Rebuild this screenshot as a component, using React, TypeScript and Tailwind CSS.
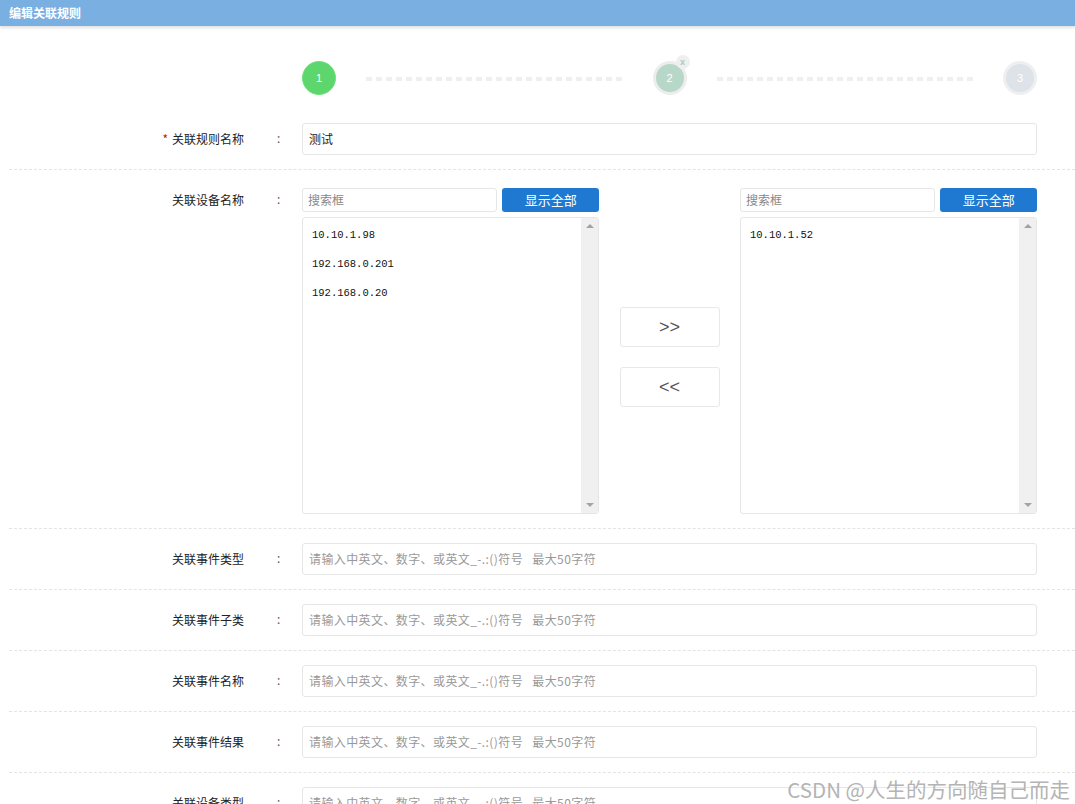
import React from 'react';

const cjk = "font-['Noto_Sans_CJK_SC','Liberation_Sans',sans-serif]";
const placeholder = '请输入中英文、数字、或英文_-.:()符号\u00a0\u00a0\u00a0最大50字符';

const rows = ['关联事件类型', '关联事件子类', '关联事件名称', '关联事件结果', '关联设备类型'];

function StepLine() {
  return (
    <div className="mt-[2px] h-[4px] flex-1 bg-[repeating-linear-gradient(90deg,#efefef_0_6px,transparent_6px_10px)]" />
  );
}

function Steps() {
  return (
    <div className="flex items-center pl-[302px] pr-[38px] pt-[35px] pb-[14px]">
      <div className="flex h-[34px] w-[34px] items-center justify-center rounded-full border border-[#6ee07c] bg-[#5dd66d] text-[11px] text-white font-['Liberation_Sans',sans-serif]">
        1
      </div>
      <div className="mx-[29px] ml-[30px] flex flex-1">
        <StepLine />
      </div>
      <div className="relative flex h-[34px] w-[34px] items-center justify-center rounded-full border-[3px] border-[#ededed] bg-[#b7d8c9] text-[11px] text-white font-['Liberation_Sans',sans-serif]">
        2
        <span className="absolute -right-[6px] -top-[9px] flex h-[14px] w-[14px] items-center justify-center rounded-full bg-[#efefef] text-[9px] font-bold leading-none text-[#9fd0bf]">
          x
        </span>
      </div>
      <div className="mx-[29px] ml-[30px] flex flex-1">
        <StepLine />
      </div>
      <div className="flex h-[34px] w-[34px] items-center justify-center rounded-full border-[3px] border-[#edeff1] bg-[#dde3e8] text-[11px] text-white font-['Liberation_Sans',sans-serif]">
        3
      </div>
    </div>
  );
}

function Label({ text, required }: { text: string; required?: boolean }) {
  return (
    <>
      <div className={`w-[235px] shrink-0 text-right text-[12px] text-[#222] ${cjk}`}>
        {required && <span className="mr-[4px] text-[#d01010]">*</span>}
        {text}
      </div>
      <div className="w-[58px] shrink-0 pl-[33px] text-[12px] text-[#555]">:</div>
    </>
  );
}

function TextInput({ value, ph }: { value?: string; ph?: string }) {
  return (
    <div
      className={`flex h-[32px] w-[735px] items-center rounded-[3px] border border-[#e6e6e6] bg-white pl-[6px] text-[12px] ${cjk} ${
        value ? 'text-[#222]' : 'tracking-[0.4px] text-[#999]'
      }`}
    >
      {value ?? ph}
    </div>
  );
}

function Scrollbar() {
  return (
    <div className="flex w-[17px] shrink-0 flex-col items-center justify-between bg-[#f0f0f0] py-[6px]">
      <span className="h-0 w-0 border-x-[4px] border-b-[4px] border-x-transparent border-b-[#a3a3a3]" />
      <span className="h-0 w-0 border-x-[4px] border-t-[4px] border-x-transparent border-t-[#a3a3a3]" />
    </div>
  );
}

function Picker({ items }: { items: string[] }) {
  return (
    <div className="w-[297px]">
      <div className="flex gap-[5px]">
        <div className={`flex h-[24px] w-[196px] items-center rounded-[3px] border border-[#e6e6e6] pl-[5px] text-[12px] text-[#888] ${cjk}`}>
          搜索框
        </div>
        <div className={`flex h-[24px] w-[97px] items-center justify-center rounded-[3px] bg-[#2079d0] text-[13px] text-white ${cjk}`}>
          显示全部
        </div>
      </div>
      <div className="mt-[5px] flex h-[297px] rounded-[3px] border border-[#e6e6e6]">
        <div className="flex-1 pl-[9px] pt-[3px]">
          {items.map((it) => (
            <div key={it} className="h-[29px] text-[10.5px] leading-[29px] text-[#111] font-['Liberation_Mono',monospace]">
              {it}
            </div>
          ))}
        </div>
        <Scrollbar />
      </div>
    </div>
  );
}

function MoveButton({ text }: { text: string }) {
  return (
    <div className="flex h-[40px] w-[100px] items-center justify-center rounded-[3px] border border-[#e8e8e8] bg-white text-[18px] text-[#555] font-['Liberation_Sans',sans-serif]">
      {text}
    </div>
  );
}

export default function App() {
  return (
    <div className="relative h-[804px] w-[1075px] overflow-hidden bg-white">
      <div className={`h-[26px] bg-[#7aafe1] pl-[9px] text-[12px] font-bold leading-[26px] text-white shadow-[0_2px_3px_rgba(0,0,0,0.12)] ${cjk}`}>
        编辑关联规则
      </div>

      <Steps />

      <div className="ml-[9px]">
        <div className="flex items-center border-b border-dashed border-[#e4e4e4] py-[14px]">
          <Label text="关联规则名称" required />
          <TextInput value="测试" />
        </div>

        <div className="flex border-b border-dashed border-[#e4e4e4] pt-[18px] pb-[14px]">
          <div className="flex h-[24px] items-center">
            <Label text="关联设备名称" />
          </div>
          <Picker items={['10.10.1.98', '192.168.0.201', '192.168.0.20']} />
          <div className="flex w-[141px] flex-col items-center gap-[20px] pt-[119px]">
            <MoveButton text=">>" />
            <MoveButton text="<<" />
          </div>
          <Picker items={['10.10.1.52']} />
        </div>

        {rows.map((r) => (
          <div key={r} className="flex items-center border-b border-dashed border-[#e4e4e4] py-[14px]">
            <Label text={r} />
            <TextInput ph={placeholder} />
          </div>
        ))}
      </div>

      <div className={`absolute bottom-[5px] right-[5px] text-[20.5px] leading-none text-[#b4b4b4] ${cjk}`}>
        CSDN @人生的方向随自己而走
      </div>
    </div>
  );
}
